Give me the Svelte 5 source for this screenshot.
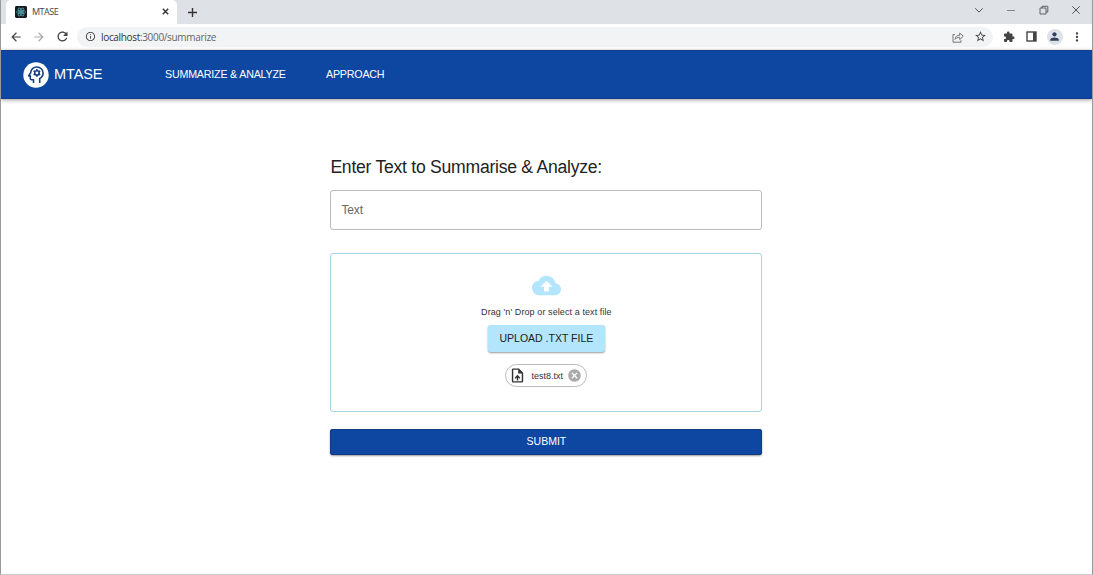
<script>
  const icons = {
    back: 'M20 11H7.83l5.59-5.59L12 4l-8 8 8 8 1.41-1.41L7.83 13H20v-2z',
    forward: 'M12 4l-1.41 1.41L16.17 11H4v2h12.17l-5.58 5.59L12 20l8-8z',
    reload: 'M17.65 6.35C16.2 4.9 14.21 4 12 4c-4.42 0-7.99 3.58-7.99 8s3.57 8 7.99 8c3.73 0 6.84-2.55 7.73-6h-2.08c-.82 2.33-3.04 4-5.65 4-3.31 0-6-2.69-6-6s2.69-6 6-6c1.66 0 3.14.69 4.22 1.78L13 11h7V4l-2.35 2.35z',
    info: 'M11 7h2v2h-2zm0 4h2v6h-2zm1-9C6.48 2 2 6.48 2 12s4.48 10 10 10 10-4.48 10-10S17.52 2 12 2zm0 18c-4.41 0-8-3.59-8-8s3.59-8 8-8 8 3.59 8 8-3.59 8-8 8z',
    star: 'M22 9.24l-7.19-.62L12 2 9.19 8.63 2 9.24l5.46 4.73L5.82 21 12 17.27 18.18 21l-1.63-7.03L22 9.24zM12 15.4l-3.76 2.27 1-4.28-3.32-2.88 4.38-.38L12 6.1l1.71 4.04 4.38.38-3.32 2.88 1 4.28L12 15.4z',
    puzzle: 'M20.5 11H19V7c0-1.1-.9-2-2-2h-4V3.5C13 2.12 11.88 1 10.5 1S8 2.12 8 3.5V5H4c-1.1 0-1.99.9-1.99 2v3.8H3.5c1.49 0 2.7 1.21 2.7 2.7s-1.21 2.7-2.7 2.7H2V20c0 1.1.9 2 2 2h3.8v-1.5c0-1.49 1.21-2.7 2.7-2.7 1.49 0 2.7 1.21 2.7 2.7V22H17c1.1 0 2-.9 2-2v-4h1.5c1.38 0 2.5-1.12 2.5-2.5S21.88 11 20.5 11z',
    person: 'M12 12c2.21 0 4-1.79 4-4s-1.79-4-4-4-4 1.79-4 4 1.79 4 4 4zm0 2c-2.67 0-8 1.34-8 4v2h16v-2c0-2.66-5.33-4-8-4z',
    more: 'M12 8c1.1 0 2-.9 2-2s-.9-2-2-2-2 .9-2 2 .9 2 2 2zm0 2c-1.1 0-2 .9-2 2s.9 2 2 2 2-.9 2-2-.9-2-2-2zm0 6c-1.1 0-2 .9-2 2s.9 2 2 2 2-.9 2-2-.9-2-2-2z',
    cloud: 'M19.35 10.04C18.67 6.59 15.64 4 12 4 9.11 4 6.6 5.64 5.35 8.04 2.34 8.36 0 10.91 0 14c0 3.31 2.69 6 6 6h13c2.76 0 5-2.24 5-5 0-2.64-2.05-4.78-4.65-4.96zM14 13v4h-4v-4H7l5-5 5 5h-3z',
    file: 'M14 2H6c-1.1 0-1.99.9-1.99 2L4 20c0 1.1.89 2 1.99 2H18c1.1 0 2-.9 2-2V8l-6-6zm4 18H6V4h7v5h5v11zM8 15.01l1.41 1.41L11 14.84V19h2v-4.16l1.59 1.59L16 15.01 12.01 11 8 15.01z',
    cancel: 'M12 2C6.47 2 2 6.47 2 12s4.47 10 10 10 10-4.47 10-10S17.53 2 12 2zm5 13.59L15.59 17 12 13.41 8.41 17 7 15.59 10.59 12 7 8.41 8.41 7 12 10.59 15.59 7 17 8.41 13.41 12 17 15.59z'
  };
</script>

{#snippet icon(name, size)}
  <svg width={size} height={size} viewBox="0 0 24 24" fill="currentColor"><path d={icons[name]} /></svg>
{/snippet}

<div class="window">
  <div class="tabs">
    <div class="tab">
      <svg class="favicon" width="12" height="12" viewBox="0 0 12 12">
        <rect width="12" height="12" rx="1.4" fill="#16191f" />
        <g fill="none" stroke="#4fa9b0" stroke-width=".75">
          <ellipse cx="6" cy="6" rx="4.6" ry="1.8" />
          <ellipse cx="6" cy="6" rx="4.6" ry="1.8" transform="rotate(60 6 6)" />
          <ellipse cx="6" cy="6" rx="4.6" ry="1.8" transform="rotate(120 6 6)" />
        </g>
        <circle cx="6" cy="6" r="1" fill="#61c9d2" />
      </svg>
      <span class="title">MTASE</span>
      <svg width="7" height="7" viewBox="0 0 7 7" stroke="#333" stroke-width="1.4"><path d="M.8.8l5.4 5.4M6.2.8L.8 6.2" /></svg>
    </div>
    <svg class="plus" width="9" height="9" viewBox="0 0 9 9" stroke="#333" stroke-width="1.4"><path d="M4.5 0v9M0 4.5h9" /></svg>
    <div class="controls">
      <svg width="10" height="10" viewBox="0 0 10 10"><path d="M1.2 3.3L5 7.1l3.8-3.8" /></svg>
      <svg width="10" height="10" viewBox="0 0 10 10"><path d="M1 5.5h8" stroke="#888" /></svg>
      <svg width="10" height="10" viewBox="0 0 10 10"><path d="M1 3h6v6H1zM3 3V1.3h5.8V7H7" stroke-width=".9" /></svg>
      <svg width="10" height="10" viewBox="0 0 10 10"><path d="M1.3 1.3l7.4 7.4M8.7 1.3L1.3 8.7" /></svg>
    </div>
  </div>

  <div class="toolbar">
    <div class="nav-icons">
      {@render icon('back', 14)}
      <span class="dim">{@render icon('forward', 14)}</span>
      {@render icon('reload', 15)}
    </div>
    <div class="address">
      {@render icon('info', 11)}
      <span class="url"><b>localhost</b>:3000/summarize</span>
      <svg class="share" width="12" height="12" viewBox="0 0 12 12" fill="none" stroke="#777" stroke-width="1"><path d="M3 3.5H1v7.7h8V9.2M3 8.3c.4-2.8 2-4 4.7-4V2L11.3 5.2 7.7 8.6V6.3C5.6 6.3 4.1 6.9 3 8.3z" /></svg>
      {@render icon('star', 13)}
    </div>
    <div class="tools">
      {@render icon('puzzle', 12)}
      <svg width="11" height="11" viewBox="0 0 11 11"><rect x="1" y="1" width="9" height="9" fill="none" stroke="#444" stroke-width="1.4" /><path d="M7 1h3v9H7z" fill="#444" /></svg>
      <span class="avatar">{@render icon('person', 13)}</span>
      {@render icon('more', 14)}
    </div>
  </div>

  <header>
    <svg class="logo" width="26" height="26" viewBox="0 0 26 26">
      <circle cx="13" cy="13" r="12.7" fill="#fff" />
      <g fill="none" stroke="#173f83" stroke-width="1.6" stroke-linejoin="round">
        <path d="M10.5 20.9v-3.1H8.4c-.7 0-1.1-.5-1.1-1.2v-2.7H5.6l2.1-3.2C7.8 7.3 10.6 5 13.8 5c3.6 0 6.3 2.7 6.3 6 0 2.5-1.3 4.4-3.4 5.5v4.4" />
        <circle cx="13.9" cy="10.9" r="2.2" />
        <path d="M13.9 7.1v1.6M13.9 13.1v1.6M10.6 9l1.4.8M15.8 12l1.4.8M17.2 9l-1.4.8M12 12l-1.4.8" />
      </g>
    </svg>
    <span class="brand">MTASE</span>
    <nav>
      <span class="n1">SUMMARIZE &amp; ANALYZE</span>
      <span class="n2">APPROACH</span>
    </nav>
  </header>

  <main>
    <h1>Enter Text to Summarise &amp; Analyze:</h1>
    <div class="field">Text</div>
    <section>
      <span class="cloud">{@render icon('cloud', 29)}</span>
      <p>Drag 'n' Drop or select a text file</p>
      <button class="upload">UPLOAD .TXT FILE</button>
      <div class="chip">
        {@render icon('file', 17)}
        <span class="name">test8.txt</span>
        <span class="remove">{@render icon('cancel', 15)}</span>
      </div>
    </section>
    <button class="submit">SUBMIT</button>
  </main>
</div>

<style>
  .window {
    box-sizing: border-box;
    width: 1093px;
    height: 575px;
    display: flex;
    flex-direction: column;
    border: solid #999;
    border-width: 0 1px 1px;
    border-bottom-color: #ccc;
    background: #fff;
    overflow: hidden;
    font-family: "Liberation Sans", Arial, sans-serif;
    white-space: nowrap;
  }
  svg { display: block; flex: none; }
  .tabs { height: 24px; flex: none; display: flex; align-items: center; background: #dee1e6; padding-left: 5px; }
  .tab {
    box-sizing: border-box;
    width: 171px;
    height: 24px;
    padding: 0 8px 1px 9px;
    display: flex;
    align-items: center;
    background: #fff;
    border-radius: 5px 5px 0 0;
  }
  .title { flex: 1; margin-left: 5px; font: 9px "Open Sans", sans-serif; letter-spacing: -.5px; color: #444; }
  .plus { margin-left: 11px; }
  .controls { margin-left: auto; display: flex; gap: 22.5px; padding: 0 11px 4px 0; fill: none; stroke: #555; stroke-width: 1; }
  .toolbar { height: 25px; padding-bottom: 1px; flex: none; display: flex; align-items: center; color: #444; }
  .nav-icons { display: flex; align-items: center; gap: 9px; padding-left: 8px; width: 68px; }
  .dim { color: #aaa; }
  .address {
    box-sizing: border-box;
    width: 916px;
    height: 20px;
    padding: 0 6px 0 8px;
    display: flex;
    align-items: center;
    background: #f1f3f4;
    border-radius: 10px;
  }
  .url { flex: 1; margin-left: 5px; font: 10px "Open Sans", sans-serif; letter-spacing: -.33px; color: #666; }
  .url b { font-weight: 400; color: #333; }
  .share { margin-right: 10px; }
  .tools { display: flex; align-items: center; margin-left: 9.5px; gap: 11px; }
  .avatar { width: 16px; height: 16px; margin-left: -1px; margin-right: -4px; display: grid; place-items: center; border-radius: 50%; background: #dde1e8; color: #34405c; }
  header {
    box-sizing: border-box;
    height: 49px;
    flex: none;
    display: flex;
    align-items: center;
    padding-left: 22px;
    background: #0d47a1;
    color: #fff;
    border-top: 1px solid #123a86;
    border-bottom: 1px solid #123a86;
    box-shadow: 0 1px 4px rgba(0, 0, 0, .4);
  }
  .brand { width: 111px; margin-left: 5px; font-size: 14.5px; letter-spacing: -.1px; margin-top: -2px; }
  nav { display: flex; font-size: 10.7px; letter-spacing: -.2px; margin-top: -2px; }
  .n1 { width: 161px; }
  main { width: 432px; margin: 57px 0 0 329.4px; display: flex; flex-direction: column; }
  h1 { margin: 0; height: 34px; line-height: 22px; font-size: 17.6px; letter-spacing: -.26px; font-weight: 400; color: #222; }
  .field { box-sizing: border-box; height: 40px; padding-left: 10px; line-height: 38px; border: 1px solid #bbb; border-radius: 3px; font-size: 12px; letter-spacing: -.1px; color: #666; }
  section {
    box-sizing: border-box;
    height: 159px;
    margin-top: 22.5px;
    padding-top: 17px;
    display: flex;
    flex-direction: column;
    align-items: center;
    border: 1px solid #a6d5e2;
    border-radius: 3px;
  }
  .cloud { color: #b3e5fc; }
  p { margin: 6px 0 7px; line-height: 12px; font-size: 9px; letter-spacing: .09px; color: #333; }
  button { border: 0; padding: 0; font-family: inherit; border-radius: 3px; }
  .upload { width: 117px; height: 27px; background: #b3e5fc; color: #222; font-size: 10.5px; box-shadow: 0 1px 2px rgba(0, 0, 0, .4); }
  .chip { box-sizing: border-box; width: 82px; height: 23px; margin-top: 12.5px; padding: 0 4px 0 3px; display: flex; align-items: center; border: 1px solid #bbb; border-radius: 12px; color: #333; }
  .name { flex: 1; margin-left: 5px; font-size: 9px; }
  .remove { color: #aaa; }
  .submit { height: 26px; margin-top: 17.5px; padding-bottom: 2px; background: #0d47a1; color: #fff; font-size: 10.5px; box-shadow: 0 1px 2px rgba(0, 0, 0, .4), inset 0 0 0 1px #123a86; }
</style>
